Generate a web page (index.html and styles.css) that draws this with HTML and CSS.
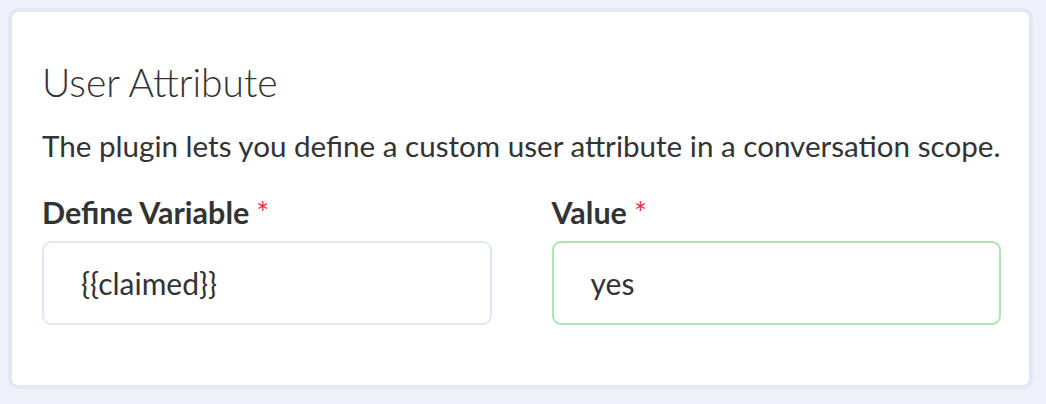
FILE: index.html
```html
<!DOCTYPE html>
<html>
<head>
<meta charset="utf-8">
<link rel="stylesheet" href="styles.css">
</head>
<body>
<div class="card">
  <h2 class="title">User Attribute</h2>
  <p class="desc">The plugin lets you define a custom user attribute in a conversation scope.</p>
  <div class="fields">
    <div class="field">
      <label class="label">Define Variable<span class="req">*</span></label>
      <div class="input">{{claimed}}</div>
    </div>
    <div class="field">
      <label class="label">Value<span class="req">*</span></label>
      <div class="input valid">yes</div>
    </div>
  </div>
</div>
</body>
</html>
```

FILE: styles.css
```css
html, body {
  margin: 0;
  padding: 0;
  background: #eef2f8;
}
body {
  padding: 8px 13px 14px 8px;
  font-family: Lato, "Noto Sans", sans-serif;
  color: #333;
}
.card {
  background: #fff;
  border: 4px solid #e1e8f3;
  border-radius: 10px;
  padding: 47px 28px 60px 30px;
}
.title {
  margin: 0;
  font-weight: 300;
  font-size: 39px;
  line-height: 46px;
  color: #333;
}
.desc {
  margin: 23px 0 0;
  font-size: 29.6px;
  line-height: 36px;
}
.fields {
  display: grid;
  grid-template-columns: 1fr 1fr;
  column-gap: 60px;
  margin-top: 30px;
}
.label {
  display: block;
  font-weight: 700;
  font-size: 30.5px;
  line-height: 36px;
}
.req {
  color: #ee3148;
  font-weight: 400;
  margin-left: 7px;
}
.input {
  margin-top: 11px;
  height: 84px;
  box-sizing: border-box;
  border: 2px solid #e1e8f3;
  border-radius: 9px;
  padding: 0 37px;
  display: flex;
  align-items: center;
  font-size: 30px;
}
.input.valid {
  border-color: #aee5ae;
}
```
